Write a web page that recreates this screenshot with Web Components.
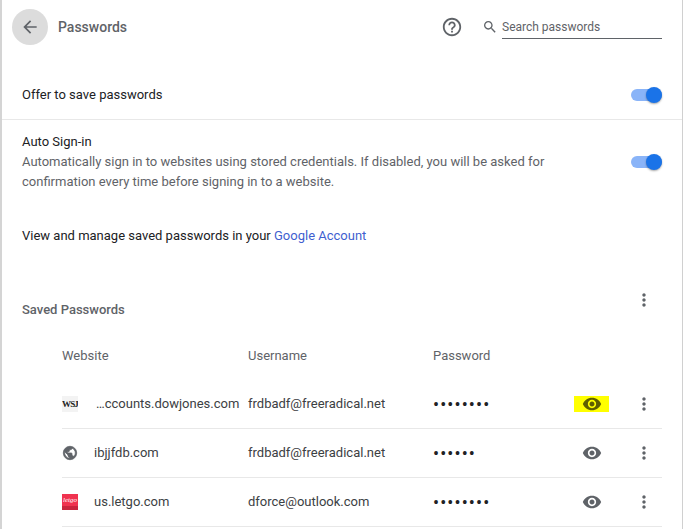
<!DOCTYPE html>
<html>
<head>
<meta charset="utf-8">
<title>Passwords</title>
<style>
    html, body {
        margin: 0;
        height: 529px;
        overflow: hidden;
        background: #fff;
    }
    body {
        font: 13px Roboto, "Liberation Sans", sans-serif;
        color: #202124;
    }
</style>
</head>
<body>

<template id="pw-icon">
<style>
    :host {
        display: inline-flex;
        fill: currentColor;
    }
    svg {
        width: 100%;
        height: 100%;
        display: block;
    }
</style>
<svg viewBox="0 0 24 24"><path></path></svg>
</template>

<template id="pw-page">
<style>
    :host {
        display: block;
        box-sizing: border-box;
        width: 683px;
        height: 529px;
        border-left: 2px solid #d4d4d4;
        border-right: 1px solid #d0d0d0;
        overflow: hidden;
    }
</style>
<slot></slot>
</template>

<template id="pw-header">
<style>
    :host {
        display: flex;
        align-items: center;
        height: 54px;
        padding: 0 20px 0 10px;
        color: #5f6368;
    }
    .back {
        width: 36px;
        height: 36px;
        border-radius: 50%;
        background: #dcdcdc;
        display: flex;
        align-items: center;
        justify-content: center;
    }
    .back pw-icon {
        width: 20px;
        height: 20px;
    }
    h1 {
        margin: 0 0 0 10px;
        font-size: 14px;
        font-weight: 500;
        flex: 1;
    }
    .help {
        width: 22px;
        height: 22px;
        margin-right: 19px;
    }
    .search {
        width: 16px;
        height: 16px;
        margin-right: 4px;
    }
    .field {
        width: 160px;
        height: 23px;
        margin-top: 1px;
        box-sizing: border-box;
        border-bottom: 1px solid #5f6368;
        line-height: 23px;
        font-size: 12px;
        white-space: nowrap;
    }
</style>
<div class="back"><pw-icon name="back"></pw-icon></div>
<h1><slot></slot></h1>
<pw-icon class="help" name="help"></pw-icon>
<pw-icon class="search" name="search"></pw-icon>
<div class="field"><slot name="placeholder"></slot></div>
</template>

<template id="pw-toggle">
<style>
    :host {
        display: flex;
        align-items: center;
        flex: none;
        width: 31px;
        height: 16px;
    }
    .track {
        width: 100%;
        height: 12px;
        border-radius: 6px;
        background: #8ab4f8;
        display: flex;
        align-items: center;
        justify-content: flex-end;
    }
    .knob {
        width: 16px;
        height: 16px;
        border-radius: 50%;
        background: #1a73e8;
        box-shadow: 0 1px 2px rgba(0, 0, 0, .35);
    }
</style>
<div class="track"><div class="knob"></div></div>
</template>

<template id="pw-setting">
<style>
    :host {
        display: flex;
        align-items: center;
        gap: 40px;
        padding: 12px 20px 9px;
        line-height: 20px;
    }
    :host([divided]) {
        border-bottom: 1px solid #e8e8e8;
    }
    .text {
        flex: 1;
    }
    ::slotted([slot=sub]) {
        display: block;
        color: #5f6368;
    }
</style>
<div class="text"><slot></slot><slot name="sub"></slot></div>
<pw-toggle></pw-toggle>
</template>

<template id="pw-section">
<style>
    :host {
        display: flex;
        align-items: flex-start;
        justify-content: space-between;
        padding: 0 28px 0 20px;
        color: #5f6368;
    }
    h2 {
        margin: 10px 0 0;
        font-size: 13px;
        font-weight: 500;
        line-height: 20px;
    }
    pw-icon {
        width: 20px;
        height: 20px;
    }
</style>
<h2><slot></slot></h2>
<pw-icon name="more"></pw-icon>
</template>

<template id="pw-list">
<style>
    :host {
        display: block;
        margin: 0 20px 0 60px;
    }
    .head {
        display: grid;
        grid-template-columns: 186px 185px 1fr;
        height: 50px;
        align-items: center;
        color: #5f6368;
    }
</style>
<div class="head"><span>Website</span><span>Username</span><span>Password</span></div>
<slot></slot>
</template>

<template id="pw-row">
<style>
    :host {
        display: grid;
        grid-template-columns: 16px 170px 185px 141px 35px 20px;
        height: 48px;
        align-items: center;
        border-bottom: 1px solid #e8e8e8;
        padding-right: 8px;
        color: #3c4043;
    }
    .site {
        padding-left: 16px;
        padding-bottom: 2px;
        white-space: nowrap;
    }
    :host([shift]) .site {
        padding-left: 18px;
    }
    .user {
        padding-bottom: 2px;
    }
    .dots {
        font-size: 18px;
        line-height: 1;
        letter-spacing: 1.1px;
        padding-top: 2px;
        color: #202124;
    }
    .eye {
        height: 16px;
        display: flex;
        justify-content: center;
        align-items: center;
        color: #5f6368;
    }
    :host([marked]) .eye {
        background: #ffff00;
        color: #5f5f00;
    }
    .eye pw-icon {
        width: 20px;
        height: 20px;
        flex: none;
    }
    .more {
        width: 20px;
        height: 20px;
        margin-left: 25px;
        color: #5f6368;
    }
    ::slotted([slot=fav]) {
        display: flex;
    }
</style>
<slot name="fav"></slot>
<span class="site"></span>
<span class="user"></span>
<span class="dots"></span>
<div class="eye"><pw-icon name="eye"></pw-icon></div>
<pw-icon class="more" name="more"></pw-icon>
</template>

<template id="pw-favicon">
<style>
    :host {
        display: flex;
        flex-direction: column;
        width: 16px;
        height: 16px;
        overflow: hidden;
        align-items: center;
        justify-content: center;
    }
    span {
        display: flex;
        align-items: center;
    }
    i {
        display: none;
    }
    :host([kind=wsj]) {
        background: #f3f3f3;
        color: #222;
        font: bold 9px "Liberation Serif", serif;
        letter-spacing: -.9px;
    }
    :host([kind=letgo]) {
        background: #f0324f;
        color: #fff;
        font: italic 7px "Liberation Serif", serif;
        justify-content: flex-start;
    }
    :host([kind=letgo]) span {
        flex: 1;
    }
    :host([kind=letgo]) i {
        display: block;
        width: 16px;
        height: 4px;
        background: #c9243d;
    }
    :host([kind=globe]) {
        color: #5f6368;
    }
</style>
<span><slot></slot></span><i></i>
</template>

<script>
    const PATHS = {
        back: "M20 11H7.83l5.59-5.59L12 4l-8 8 8 8 1.41-1.41L7.83 13H20v-2z",
        help: "M11 18h2v-2h-2v2zm1-16C6.48 2 2 6.48 2 12s4.48 10 10 10 10-4.48 10-10S17.52 2 12 2zm0 18c-4.41 0-8-3.59-8-8s3.59-8 8-8 8 3.59 8 8-3.59 8-8 8zm0-14c-2.21 0-4 1.79-4 4h2c0-1.1.9-2 2-2s2 .9 2 2c0 2-3 1.75-3 5h2c0-2.25 3-2.5 3-5 0-2.21-1.79-4-4-4z",
        search: "M15.5 14h-.79l-.28-.27C15.41 12.59 16 11.11 16 9.5 16 5.91 13.09 3 9.5 3S3 5.91 3 9.5 5.91 16 9.5 16c1.61 0 3.09-.59 4.23-1.57l.27.28v.79l5 4.99L20.49 19l-4.99-5zm-6 0C7.01 14 5 11.99 5 9.5S7.01 5 9.5 5 14 7.01 14 9.5 11.99 14 9.5 14z",
        more: "M12 8c1.1 0 2-.9 2-2s-.9-2-2-2-2 .9-2 2 .9 2 2 2zm0 2c-1.1 0-2 .9-2 2s.9 2 2 2 2-.9 2-2-.9-2-2-2zm0 6c-1.1 0-2 .9-2 2s.9 2 2 2 2-.9 2-2-.9-2-2-2z",
        eye: "M12 4.5C7 4.5 2.73 7.61 1 12c1.73 4.39 6 7.5 11 7.5s9.27-3.11 11-7.5c-1.73-4.39-6-7.5-11-7.5zM12 17c-2.76 0-5-2.24-5-5s2.24-5 5-5 5 2.24 5 5-2.24 5-5 5zm0-8c-1.66 0-3 1.34-3 3s1.34 3 3 3 3-1.34 3-3-1.34-3-3-3z",
        globe: "M12 2C6.48 2 2 6.48 2 12s4.48 10 10 10 10-4.48 10-10S17.52 2 12 2zm-1 17.93c-3.95-.49-7-3.85-7-7.93 0-.62.08-1.21.21-1.79L9 15v1c0 1.1.9 2 2 2v1.93zm6.9-2.54c-.26-.81-1-1.39-1.9-1.39h-1v-3c0-.55-.45-1-1-1H8v-2h2c.55 0 1-.45 1-1V7h2c1.1 0 2-.9 2-2v-.41c2.93 1.19 5 4.06 5 7.41 0 2.08-.8 3.97-2.1 5.39z"
    };

    // plain element: clones its template into an open shadow root
    class PwBase extends HTMLElement {
        constructor() {
            super();
            const t = document.querySelector("#" + this.localName);
            this.attachShadow({mode: 'open'}).appendChild(t.content.cloneNode(true));
        }
    }

    class PwIcon extends PwBase {
        connectedCallback() {
            this.shadowRoot.querySelector("path").setAttribute("d", PATHS[this.getAttribute("name")]);
        }
    }

    class PwRow extends PwBase {
        connectedCallback() {
            const r = this.shadowRoot;
            r.querySelector(".site").textContent = this.getAttribute("site");
            r.querySelector(".user").textContent = this.getAttribute("user");
            r.querySelector(".dots").textContent = "•".repeat(Number(this.getAttribute("len")));
        }
    }

    for (const name of ["pw-page", "pw-header", "pw-toggle", "pw-setting", "pw-section", "pw-list", "pw-favicon"]) {
        customElements.define(name, class extends PwBase {});
    }
    customElements.define("pw-icon", PwIcon);
    customElements.define("pw-row", PwRow);
</script>

<pw-page>
    <pw-header>Passwords<span slot="placeholder">Search passwords</span></pw-header>
    <pw-setting divided style="margin-top:19px;padding-bottom:14px">Offer to save passwords</pw-setting>
    <pw-setting>Auto Sign-in<span slot="sub">Automatically sign in to websites using stored credentials. If disabled, you will be asked for<br>confirmation every time before signing in to a website.</span></pw-setting>
    <div style="padding:0 20px;margin-top:25px;line-height:20px">View and manage saved passwords in your <a href="#" style="color:#3f5fd0;text-decoration:none">Google Account</a></div>
    <pw-section style="margin-top:44px">Saved Passwords</pw-section>
    <pw-list style="margin-top:10px">
        <pw-row marked shift site="…ccounts.dowjones.com" user="frdbadf@freeradical.net" len="8"><pw-favicon slot="fav" kind="wsj">WSJ</pw-favicon></pw-row>
        <pw-row site="ibjjfdb.com" user="frdbadf@freeradical.net" len="6"><pw-favicon slot="fav" kind="globe"><pw-icon name="globe" style="width:16px;height:16px;flex:none;stroke:#5f6368;stroke-width:1.2"></pw-icon></pw-favicon></pw-row>
        <pw-row site="us.letgo.com" user="dforce@outlook.com" len="8"><pw-favicon slot="fav" kind="letgo">letgo</pw-favicon></pw-row>
    </pw-list>
</pw-page>

</body>
</html>
